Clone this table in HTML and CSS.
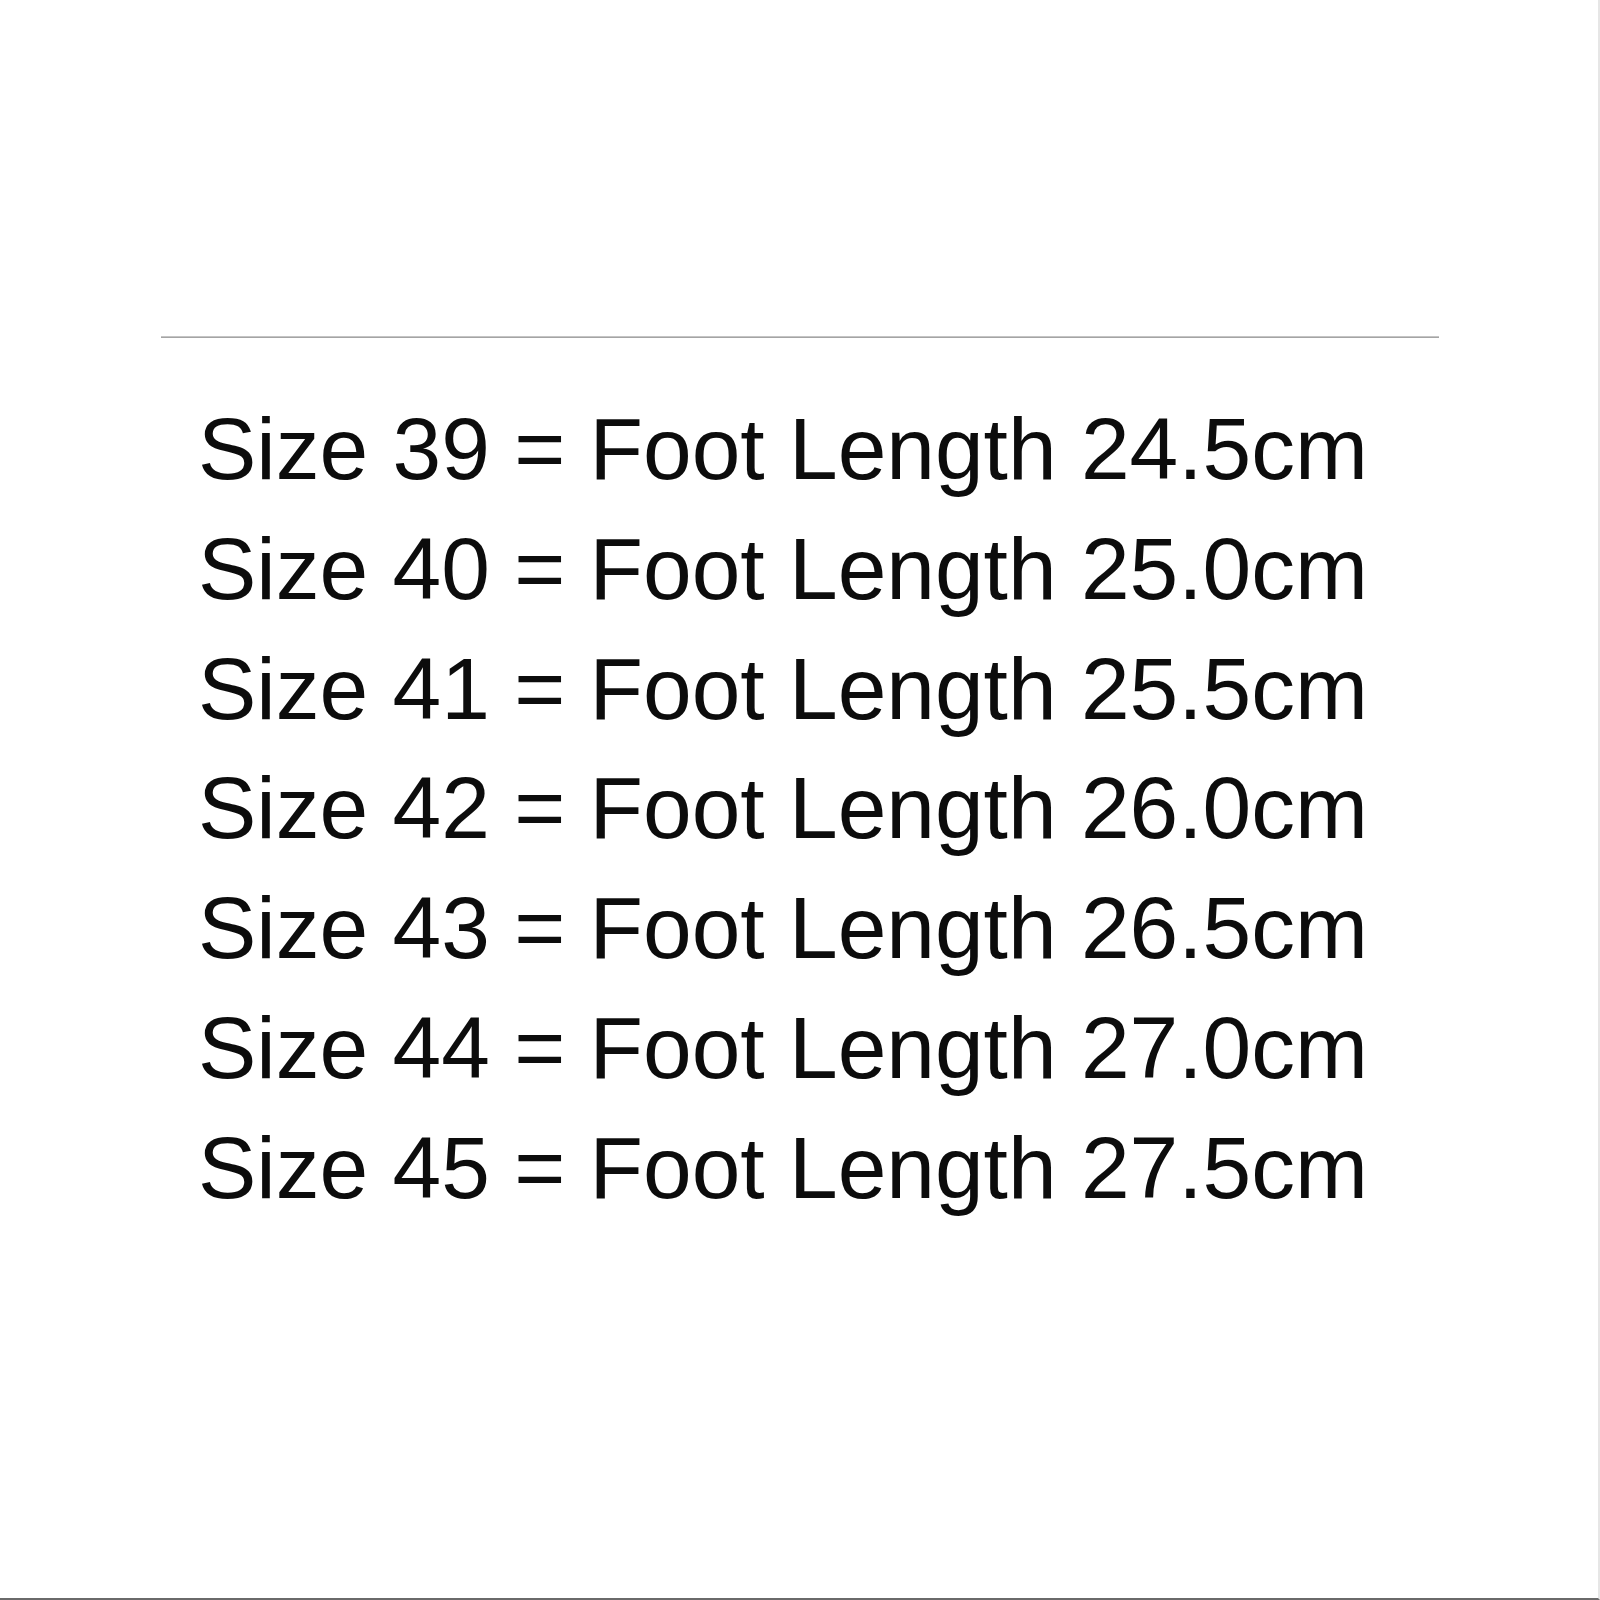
FILE: index.html
```html
<!DOCTYPE html>
<html lang="en">
<head>
    <meta charset="UTF-8">
    <meta name="viewport" content="width=device-width, initial-scale=1.0">
    <title>Size Chart</title>
    <link rel="stylesheet" href="styles.css">
</head>
<body>

<div class="sheet">
    <hr class="divider">

    <!-- Tabel ukuran sepatu -->
    <ul class="size-list">
        <li>Size 39 = Foot Length 24.5cm</li>
        <li>Size 40 = Foot Length 25.0cm</li>
        <li>Size 41 = Foot Length 25.5cm</li>
        <li>Size 42 = Foot Length 26.0cm</li>
        <li>Size 43 = Foot Length 26.5cm</li>
        <li>Size 44 = Foot Length 27.0cm</li>
        <li>Size 45 = Foot Length 27.5cm</li>
    </ul>
</div>

</body>
</html>
```

FILE: styles.css
```css
body {
    font-family: "Liberation Sans", Arial, sans-serif;
    margin: 0;
    padding: 0;
    background-color: #fff;
}

.sheet {
    box-sizing: border-box;
    width: 1600px;
    height: 1600px;
    padding-top: 336px;
    border-right: 2px solid #e6e6e6;
    border-bottom: 2px solid #6a6a6a;
    overflow: hidden;
}

.divider {
    width: 1278px;
    height: 2px;
    margin: 0 0 0 161px;
    border: none;
    border-bottom: 1px solid #a4a4a4;
    border-top: 1px solid #c4c4c4;
    box-sizing: border-box;
}

.size-list {
    list-style: none;
    margin: 52px 0 0 0;
    padding: 0 0 0 198px;
    font-size: 87.5px;
    line-height: 119.8px;
    color: #0c0c0c;
}
```
